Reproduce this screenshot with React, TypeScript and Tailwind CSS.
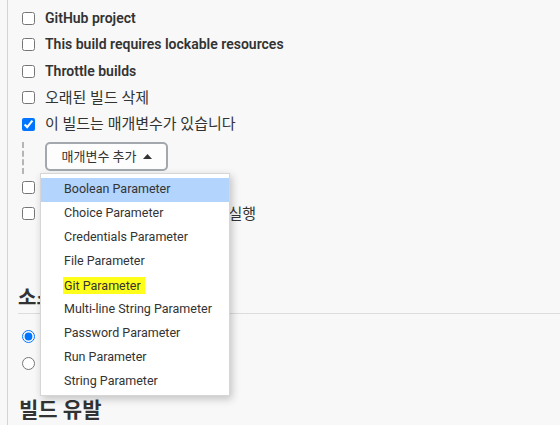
import React from "react";

const FONT = { fontFamily: 'Roboto, "Noto Sans CJK KR", sans-serif' };

function Row({ label, checked = false, ko = false }: { label: string; checked?: boolean; ko?: boolean }) {
  return (
    <div className="flex items-center h-[26.5px] ml-[4px]">
      <input type="checkbox" defaultChecked={checked} className="w-[13px] h-[13px] m-0 shrink-0" />
      <span className={`ml-[10px] text-[#333] whitespace-nowrap ${ko ? "font-normal text-[15px]" : "font-semibold text-[14px]"}`}>{label}</span>
    </div>
  );
}

function Radio({ checked = false }: { checked?: boolean }) {
  return (
    <div className="flex items-center h-[27px] ml-[4px]">
      <input type="radio" name="scm" defaultChecked={checked} className="w-[13px] h-[13px] m-0 shrink-0" />
    </div>
  );
}

const items = [
  "Boolean Parameter",
  "Choice Parameter",
  "Credentials Parameter",
  "File Parameter",
  "Git Parameter",
  "Multi-line String Parameter",
  "Password Parameter",
  "Run Parameter",
  "String Parameter",
];

export default function App() {
  return (
    <div className="w-[560px] h-[425px] overflow-hidden bg-[#f8f8f8] relative" style={FONT}>
      <div className="ml-[7px] border-l border-[#d4d4d4] h-full pl-[10px] pt-[5px]">
        <Row label="GitHub project" />
        <Row label="This build requires lockable resources" />
        <Row label="Throttle builds" />
        <Row label="오래된 빌드 삭제" ko />
        <Row label="이 빌드는 매개변수가 있습니다" checked ko />
        <div className="pt-[4.5px]">
          <div className="ml-[4px] h-[32px] border-l-2 border-dashed border-[#b5b5b5] pl-[21px]">
            <button className="h-[29px] w-[123px] border-2 border-[#a3a8ae] rounded-[5px] bg-[#fdfdfd] flex items-center justify-center gap-[6px] text-[13px] text-[#333]">
              <span>매개변수 추가</span>
              <svg width="9" height="5" viewBox="0 0 9 5"><path d="M0 5 L4.5 0 L9 5 Z" fill="#333" /></svg>
            </button>
          </div>
        </div>
        <Row label="빌드 안함" ko />
        <Row label="필요한 경우 concurrent 빌드 실행" ko />
        <div className="mt-[57px] h-[30px] border-b border-[#dcdcdc] text-[20px] leading-[28px] font-bold text-[#333]">
          소스 코드 관리
        </div>
        <div className="mt-[9px]">
          <Radio checked />
          <Radio />
        </div>
        <div className="mt-[19px] text-[21px] leading-[28px] font-bold text-[#333] ml-[1px]">빌드 유발</div>
      </div>

      <div className="absolute left-[40px] top-[173px] w-[190px] h-[223px] bg-white border border-[#d6d6d6] shadow-[2px_3px_8px_rgba(0,0,0,0.22)] pt-[3.5px]">
        {items.map((it, i) => (
          <div
            key={it}
            className={`h-[24px] flex items-center pl-[23px] text-[12.5px] text-[#333] whitespace-nowrap ${i === 0 ? "bg-[#b3d4fc]" : ""}`}
          >
            {it === "Git Parameter" ? (
              <span className="inline-block bg-[#ffff1a] leading-[17px] pr-[4px] -ml-[1px] pl-[1px]">{it}</span>
            ) : (
              it
            )}
          </div>
        ))}
      </div>
    </div>
  );
}
